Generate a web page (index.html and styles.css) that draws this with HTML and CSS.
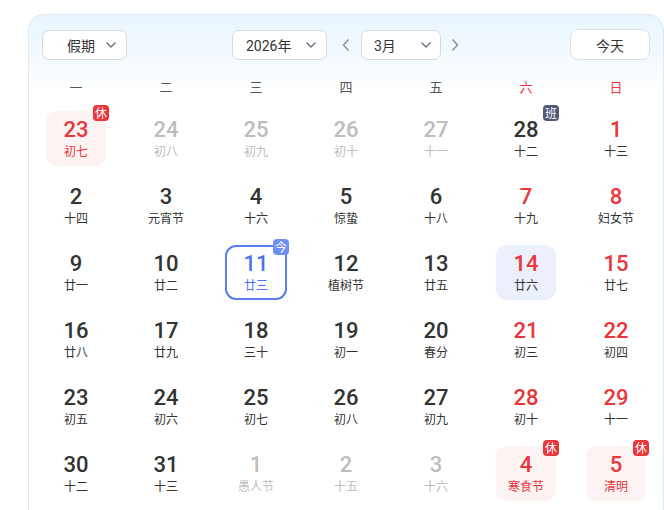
FILE: index.html
```html
<!DOCTYPE html>
<html lang="zh">
<head>
<meta charset="utf-8">
<link rel="stylesheet" href="styles.css">
</head>
<body>
<div class="panel">
  <div class="toolbar">
    <div class="select sel-holiday"><span class="sel-text">假期</span>
      <svg class="chev" viewBox="0 0 12 8" width="12" height="8"><path d="M1.5 1.5 L6 6 L10.5 1.5" /></svg></div>
    <div class="nav-group">
      <div class="select sel-year"><span class="sel-text">2026年</span>
        <svg class="chev" viewBox="0 0 12 8" width="12" height="8"><path d="M1.5 1.5 L6 6 L10.5 1.5" /></svg></div>
      <span class="arrow arrow-prev"><svg viewBox="0 0 8 14" width="8" height="14"><path d="M6.5 1.5 L1.5 7 L6.5 12.5" /></svg></span>
      <div class="select sel-month"><span class="sel-text">3月</span>
        <svg class="chev" viewBox="0 0 12 8" width="12" height="8"><path d="M1.5 1.5 L6 6 L10.5 1.5" /></svg></div>
      <span class="arrow arrow-next"><svg viewBox="0 0 8 14" width="8" height="14"><path d="M1.5 1.5 L6.5 7 L1.5 12.5" /></svg></span>
    </div>
    <button class="today-btn">今天</button>
  </div>
  <div class="weekdays">
    <span>一</span><span>二</span><span>三</span><span>四</span><span>五</span><span class="wk-red">六</span><span class="wk-red">日</span>
  </div>
  <div class="grid">
    <div class="cell"><div class="day holiday red"><span class="num">23</span><span class="lunar">初七</span><i class="badge badge-rest">休</i></div></div>
    <div class="cell"><div class="day other"><span class="num">24</span><span class="lunar">初八</span></div></div>
    <div class="cell"><div class="day other"><span class="num">25</span><span class="lunar">初九</span></div></div>
    <div class="cell"><div class="day other"><span class="num">26</span><span class="lunar">初十</span></div></div>
    <div class="cell"><div class="day other"><span class="num">27</span><span class="lunar">十一</span></div></div>
    <div class="cell"><div class="day"><span class="num">28</span><span class="lunar">十二</span><i class="badge badge-work">班</i></div></div>
    <div class="cell"><div class="day weekend"><span class="num">1</span><span class="lunar">十三</span></div></div>

    <div class="cell"><div class="day"><span class="num">2</span><span class="lunar">十四</span></div></div>
    <div class="cell"><div class="day"><span class="num">3</span><span class="lunar">元宵节</span></div></div>
    <div class="cell"><div class="day"><span class="num">4</span><span class="lunar">十六</span></div></div>
    <div class="cell"><div class="day"><span class="num">5</span><span class="lunar">惊蛰</span></div></div>
    <div class="cell"><div class="day"><span class="num">6</span><span class="lunar">十八</span></div></div>
    <div class="cell"><div class="day weekend"><span class="num">7</span><span class="lunar">十九</span></div></div>
    <div class="cell"><div class="day weekend"><span class="num">8</span><span class="lunar">妇女节</span></div></div>

    <div class="cell"><div class="day"><span class="num">9</span><span class="lunar">廿一</span></div></div>
    <div class="cell"><div class="day"><span class="num">10</span><span class="lunar">廿二</span></div></div>
    <div class="cell"><div class="day today"><span class="num">11</span><span class="lunar">廿三</span><i class="badge badge-today">今</i></div></div>
    <div class="cell"><div class="day"><span class="num">12</span><span class="lunar">植树节</span></div></div>
    <div class="cell"><div class="day"><span class="num">13</span><span class="lunar">廿五</span></div></div>
    <div class="cell"><div class="day weekend selected"><span class="num">14</span><span class="lunar">廿六</span></div></div>
    <div class="cell"><div class="day weekend"><span class="num">15</span><span class="lunar">廿七</span></div></div>

    <div class="cell"><div class="day"><span class="num">16</span><span class="lunar">廿八</span></div></div>
    <div class="cell"><div class="day"><span class="num">17</span><span class="lunar">廿九</span></div></div>
    <div class="cell"><div class="day"><span class="num">18</span><span class="lunar">三十</span></div></div>
    <div class="cell"><div class="day"><span class="num">19</span><span class="lunar">初一</span></div></div>
    <div class="cell"><div class="day"><span class="num">20</span><span class="lunar">春分</span></div></div>
    <div class="cell"><div class="day weekend"><span class="num">21</span><span class="lunar">初三</span></div></div>
    <div class="cell"><div class="day weekend"><span class="num">22</span><span class="lunar">初四</span></div></div>

    <div class="cell"><div class="day"><span class="num">23</span><span class="lunar">初五</span></div></div>
    <div class="cell"><div class="day"><span class="num">24</span><span class="lunar">初六</span></div></div>
    <div class="cell"><div class="day"><span class="num">25</span><span class="lunar">初七</span></div></div>
    <div class="cell"><div class="day"><span class="num">26</span><span class="lunar">初八</span></div></div>
    <div class="cell"><div class="day"><span class="num">27</span><span class="lunar">初九</span></div></div>
    <div class="cell"><div class="day weekend"><span class="num">28</span><span class="lunar">初十</span></div></div>
    <div class="cell"><div class="day weekend"><span class="num">29</span><span class="lunar">十一</span></div></div>

    <div class="cell"><div class="day"><span class="num">30</span><span class="lunar">十二</span></div></div>
    <div class="cell"><div class="day"><span class="num">31</span><span class="lunar">十三</span></div></div>
    <div class="cell"><div class="day other"><span class="num">1</span><span class="lunar">愚人节</span></div></div>
    <div class="cell"><div class="day other"><span class="num">2</span><span class="lunar">十五</span></div></div>
    <div class="cell"><div class="day other"><span class="num">3</span><span class="lunar">十六</span></div></div>
    <div class="cell"><div class="day holiday red"><span class="num">4</span><span class="lunar">寒食节</span><i class="badge badge-rest">休</i></div></div>
    <div class="cell"><div class="day holiday red"><span class="num">5</span><span class="lunar">清明</span><i class="badge badge-rest">休</i></div></div>
  </div>
</div>
</body>
</html>
```
FILE: styles.css
```css
* { box-sizing: border-box; }
html, body {
  margin: 0;
  padding: 0;
  background: #ffffff;
}
body {
  font-family: Roboto, "Noto Sans CJK SC", "Noto Sans", sans-serif;
  color: #333333;
  overflow: hidden;
  height: 510px;
}
.panel {
  margin: 14px 0 0 28px;
  width: 636px;
  height: 520px;
  border: 1px solid #e2e8ef;
  border-radius: 16px;
  background: linear-gradient(180deg, #e9f5fe 0px, #f6fbff 50px, #ffffff 75px);
}
.toolbar {
  display: flex;
  align-items: center;
  padding: 14px 13px 0 13px;
  height: 45px;
}
.select {
  display: flex;
  align-items: center;
  height: 30px;
  border: 1px solid #d6d9e1;
  border-radius: 7px;
  background: #ffffff;
  font-size: 14px;
  color: #333333;
  position: relative;
}
.sel-text { font-family: Roboto, "Noto Sans CJK SC", sans-serif; }
.chev {
  fill: none;
  stroke: #6b7080;
  stroke-width: 1.4;
  position: absolute;
  top: 10px;
}
.sel-holiday { width: 85px; }
.sel-holiday .sel-text { margin-left: 24px; }
.sel-holiday .chev { right: 9px; }
.nav-group {
  display: flex;
  align-items: center;
  margin-left: 105px;
}
.sel-year { width: 95px; }
.sel-year .sel-text { margin-left: 13px; }
.sel-year .chev { right: 9px; }
.sel-month { width: 80px; }
.sel-month .sel-text { margin-left: 12px; }
.sel-month .chev { right: 8px; }
.arrow {
  display: flex;
  align-items: center;
  justify-content: center;
  width: 20px;
  height: 30px;
}
.arrow svg {
  fill: none;
  stroke: #8a8f9c;
  stroke-width: 1.4;
}
.arrow-prev { margin-left: 9px; margin-right: 5px; }
.arrow-next { margin-left: 4px; }
.today-btn {
  margin-left: auto;
  width: 80px;
  height: 31px;
  border: 1px solid #dcdfe6;
  border-radius: 8px;
  background: #ffffff;
  font-family: "Noto Sans CJK SC", sans-serif;
  font-size: 14px;
  color: #333333;
  padding: 0;
}
.weekdays {
  display: grid;
  grid-template-columns: repeat(7, 90px);
  margin: 13px 0 0 2px;
  height: 28px;
  line-height: 28px;
  font-family: "Noto Sans CJK SC", sans-serif;
  font-size: 13px;
  color: #555555;
  text-align: center;
}
.wk-red { color: #e8363b; }
.grid {
  display: grid;
  grid-template-columns: repeat(7, 90px);
  grid-auto-rows: 55px;
  row-gap: 12px;
  margin: 10px 0 0 2px;
}
.cell {
  display: flex;
  justify-content: center;
}
.day {
  position: relative;
  width: 60px;
  height: 55px;
  border-radius: 11px;
  display: flex;
  flex-direction: column;
  align-items: center;
  padding-top: 9px;
  color: #333333;
}
.num {
  font-family: Roboto, sans-serif;
  font-weight: 500;
  font-size: 22px;
  line-height: 20px;
}
.lunar {
  font-family: "Noto Sans CJK SC", sans-serif;
  font-size: 12px;
  line-height: 14px;
  margin-top: 4px;
}
.weekend .num { color: #e8363b; }
.other { color: #bdbdbd; }
.red { color: #e8363b; }
.red .num { color: #e8363b; }
.holiday { background: #fdf3f3; }
.selected { background: #ecf0fd; }
.today {
  border: 2px solid #5b7cf2;
  color: #4f72f0;
  width: 62px;
  padding-top: 7px;
}
.badge {
  position: absolute;
  top: -6px;
  right: -3px;
  width: 16px;
  height: 16px;
  border-radius: 4px;
  font-style: normal;
  font-family: "Noto Sans CJK SC", sans-serif;
  font-size: 12px;
  line-height: 16px;
  text-align: center;
  color: #ffffff;
}
.badge-rest { background: #e8363b; }
.badge-work { background: #4e5a78; }
.badge-today { background: #6c8ef6; top: -8px; right: -4px; }
```
